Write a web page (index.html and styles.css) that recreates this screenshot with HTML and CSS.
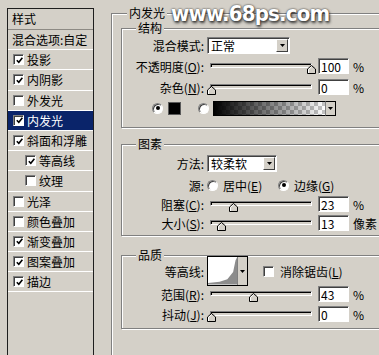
FILE: index.html
```html
<!DOCTYPE html>
<html lang="zh-CN">
<head>
    <meta charset="UTF-8">
    <meta name="viewport" content="width=device-width, initial-scale=1.0">
    <title>图层样式 - 内发光</title>
    <link rel="stylesheet" href="styles.css">
</head>
<body>
    <div class="dialog">
        <ul class="style-list">
            <li class="list-head">样式</li>
            <li class="item plain">混合选项:自定</li>
            <li class="item"><span class="cb"><svg viewBox="0 0 7 7"><path d="M0.8 3.2l2 2 3.6-4.4"/></svg></span>投影</li>
            <li class="item"><span class="cb"><svg viewBox="0 0 7 7"><path d="M0.8 3.2l2 2 3.6-4.4"/></svg></span>内阴影</li>
            <li class="item"><span class="cb"></span>外发光</li>
            <li class="item sel"><span class="cb"><svg viewBox="0 0 7 7"><path d="M0.8 3.2l2 2 3.6-4.4"/></svg></span>内发光</li>
            <li class="item"><span class="cb"><svg viewBox="0 0 7 7"><path d="M0.8 3.2l2 2 3.6-4.4"/></svg></span>斜面和浮雕</li>
            <li class="item sub"><span class="cb"><svg viewBox="0 0 7 7"><path d="M0.8 3.2l2 2 3.6-4.4"/></svg></span>等高线</li>
            <li class="item sub"><span class="cb"></span>纹理</li>
            <li class="item"><span class="cb"></span>光泽</li>
            <li class="item"><span class="cb"></span>颜色叠加</li>
            <li class="item"><span class="cb"><svg viewBox="0 0 7 7"><path d="M0.8 3.2l2 2 3.6-4.4"/></svg></span>渐变叠加</li>
            <li class="item"><span class="cb"><svg viewBox="0 0 7 7"><path d="M0.8 3.2l2 2 3.6-4.4"/></svg></span>图案叠加</li>
            <li class="item"><span class="cb"><svg viewBox="0 0 7 7"><path d="M0.8 3.2l2 2 3.6-4.4"/></svg></span>描边</li>
        </ul>

        <fieldset class="group outer">
            <legend>内发光</legend>

            <fieldset class="group struct">
                <legend>结构</legend>
                <div class="row">
                    <span class="label">混合模式:</span>
                    <div class="select mode">
                        <span>正常</span>
                        <span class="drop"><svg viewBox="0 0 5 3"><path d="M0 0h5l-2.5 3z"/></svg></span>
                    </div>
                </div>
                <div class="row">
                    <span class="label">不透明度(<u>O</u>):</span>
                    <div class="slider">
                        <div class="track"></div>
                        <svg class="thumb" style="left: 97px" viewBox="0 0 9 9"><path class="knob" d="M0.5 8.5V4L4.5 0.5 8.5 4v4.5z"/><path class="shine" d="M1.5 8V4.4l3-2.6"/></svg>
                    </div>
                    <input class="num" type="text" value="100">
                    <span class="unit">%</span>
                </div>
                <div class="row">
                    <span class="label">杂色(<u>N</u>):</span>
                    <div class="slider">
                        <div class="track"></div>
                        <svg class="thumb" style="left: -3px" viewBox="0 0 9 9"><path class="knob" d="M0.5 8.5V4L4.5 0.5 8.5 4v4.5z"/><path class="shine" d="M1.5 8V4.4l3-2.6"/></svg>
                    </div>
                    <input class="num" type="text" value="0">
                    <span class="unit">%</span>
                </div>
                <div class="row swatches">
                    <span class="radio on"></span>
                    <span class="swatch"></span>
                    <span class="radio alt"></span>
                    <span class="gradient"></span>
                    <span class="drop edge"><svg viewBox="0 0 5 3"><path d="M0 0h5l-2.5 3z"/></svg></span>
                </div>
            </fieldset>

            <fieldset class="group pixels">
                <legend>图素</legend>
                <div class="row">
                    <span class="label">方法:</span>
                    <div class="select method">
                        <span>较柔软</span>
                        <span class="drop"><svg viewBox="0 0 5 3"><path d="M0 0h5l-2.5 3z"/></svg></span>
                    </div>
                </div>
                <div class="row source">
                    <span class="label">源:</span>
                    <span class="radio"></span>
                    <span class="opt">居中(<u>E</u>)</span>
                    <span class="radio on"></span>
                    <span class="opt">边缘(<u>G</u>)</span>
                </div>
                <div class="row">
                    <span class="label">阻塞(<u>C</u>):</span>
                    <div class="slider">
                        <div class="track"></div>
                        <svg class="thumb" style="left: 19px" viewBox="0 0 9 9"><path class="knob" d="M0.5 8.5V4L4.5 0.5 8.5 4v4.5z"/><path class="shine" d="M1.5 8V4.4l3-2.6"/></svg>
                    </div>
                    <input class="num" type="text" value="23">
                    <span class="unit">%</span>
                </div>
                <div class="row">
                    <span class="label">大小(<u>S</u>):</span>
                    <div class="slider">
                        <div class="track"></div>
                        <svg class="thumb" style="left: 7px" viewBox="0 0 9 9"><path class="knob" d="M0.5 8.5V4L4.5 0.5 8.5 4v4.5z"/><path class="shine" d="M1.5 8V4.4l3-2.6"/></svg>
                    </div>
                    <input class="num" type="text" value="13">
                    <span class="unit">像素</span>
                </div>
            </fieldset>

            <fieldset class="group quality">
                <legend>品质</legend>
                <div class="row contour-row">
                    <span class="label">等高线:</span>
                    <div class="contour">
                        <svg class="curve" viewBox="0 0 30 28"><path d="M0 28V26.5L12 25 20 22.5 26 15 28.5 3 30 0V28z"/></svg>
                        <span class="drop flat"><svg viewBox="0 0 5 3"><path d="M0 0h5l-2.5 3z"/></svg></span>
                    </div>
                    <span class="cb aa"></span>
                    <span class="opt-text">消除锯齿(<u>L</u>)</span>
                </div>
                <div class="row range">
                    <span class="label">范围(<u>R</u>):</span>
                    <div class="slider">
                        <div class="track"></div>
                        <svg class="thumb" style="left: 39px" viewBox="0 0 9 9"><path class="knob" d="M0.5 8.5V4L4.5 0.5 8.5 4v4.5z"/><path class="shine" d="M1.5 8V4.4l3-2.6"/></svg>
                    </div>
                    <input class="num" type="text" value="43">
                    <span class="unit">%</span>
                </div>
                <div class="row">
                    <span class="label">抖动(<u>J</u>):</span>
                    <div class="slider">
                        <div class="track"></div>
                        <svg class="thumb" style="left: -3px" viewBox="0 0 9 9"><path class="knob" d="M0.5 8.5V4L4.5 0.5 8.5 4v4.5z"/><path class="shine" d="M1.5 8V4.4l3-2.6"/></svg>
                    </div>
                    <input class="num" type="text" value="0">
                    <span class="unit">%</span>
                </div>
            </fieldset>
        </fieldset>
    </div>

    <div class="watermark">www.68ps.com</div>
</body>
</html>
```

FILE: styles.css
```css
html, body { margin: 0; overflow: hidden; }
body { position: relative; width: 379px; height: 355px; background: #d4d0c8; color: #000; font: 12px "Noto Sans CJK SC", sans-serif; }
u { text-underline-offset: 1px; }

.dialog { display: flex; align-items: flex-start; }

/* left list of effects */
.style-list { flex: none; width: 87px; height: 370px; box-sizing: border-box; margin: 8px 17px 0 7px; padding: 0; list-style: none; border: 1px solid #1e1e1e; }
.list-head { height: 20px; line-height: 20px; padding-left: 4px; border-bottom: 1px solid #8d8a84; }
.item { display: flex; align-items: center; height: 19.2px; padding-left: 5px; border-bottom: 1px solid #fff; white-space: nowrap; }
.item.plain { padding-left: 4px; }
.item.sub { padding-left: 17px; }
.item.sel { background: #0a246a; color: #fff; }

.cb { flex: none; display: flex; align-items: center; justify-content: center; width: 11px; height: 11px; box-sizing: border-box; margin-right: 3px; background: #fff; border: 1px solid; border-color: #808080 #fff #fff #808080; box-shadow: inset 1px 1px #404040; }
.cb svg { width: 7px; height: 7px; margin: 1px 0 0 1px; fill: none; stroke: #000; stroke-width: 1.6; }

/* group boxes */
.group { min-width: 0; margin: 0; padding: 0; border: 1px solid #808080; box-shadow: inset 1px 1px #fff, 1px 1px #fff; }
.group > legend { margin-left: 14px; padding: 0 2px; line-height: 14px; background: #d4d0c8; }
.outer { flex: none; width: 290px; box-sizing: border-box; margin-top: 6px; padding: 1px 9px 30px; }
.outer > legend { margin-left: 6px; }
.struct { padding: 2px 0 11px; }
.pixels { margin-top: 9px; padding: 4px 0; }
.quality { margin-top: 12px; padding: 1px 0 6px; }

.row { display: flex; align-items: center; height: 16px; white-space: nowrap; }
.struct .row + .row { margin-top: 5px; }
.pixels .row + .row { margin-top: 3px; }
.pixels .row.source { margin-top: 6px; }
.quality .row + .row { margin-top: 4px; }
.quality .row.range { margin-top: 7px; }
.label { flex: none; width: 82px; text-align: right; }

/* controls */
.select { flex: none; display: flex; align-items: center; justify-content: space-between; height: 17px; box-sizing: border-box; margin-left: 3px; padding: 1px 1px 0 3px; background: #fff; border: 1px solid; border-color: #808080 #fff #fff #808080; box-shadow: inset 1px 1px #404040; }
.select.mode { width: 83px; }
.select.method { width: 70px; }
.drop { flex: none; display: flex; align-items: center; justify-content: center; width: 12px; height: 13px; box-sizing: border-box; background: #d4d0c8; border: 1px solid; border-color: #fff #404040 #404040 #fff; }
.drop svg { width: 5px; height: 3px; fill: #000; }
.drop.edge { width: 11px; height: 15px; border-color: #000; border-left-color: #808080; }
.drop.flat { width: 10px; height: 28px; border: 0; border-left: 1px solid #808080; }

.slider { position: relative; flex: none; width: 102px; height: 16px; margin-left: 6px; }
.track { height: 5px; margin-top: 5px; box-sizing: border-box; background: #d4d0c8; border: 1px solid; border-color: #808080 #fff #fff #808080; box-shadow: inset 1px 1px #000; }
.thumb { position: absolute; top: 7px; width: 9px; height: 9px; }
.thumb .knob { fill: #d4d0c8; stroke: #000; stroke-width: 1; }
.thumb .shine { fill: none; stroke: #fff; stroke-width: 1; }

.num { flex: none; width: 31px; height: 16px; box-sizing: border-box; margin: 0 0 0 6px; padding: 0 0 0 2px; font: inherit; line-height: 14px; color: #000; background: #fff; border: 1px solid; border-color: #808080 #fff #fff #808080; box-shadow: inset 1px 1px #404040; outline: none; }
.unit { margin-left: 4px; }

.radio { flex: none; position: relative; width: 11px; height: 11px; box-sizing: border-box; border-radius: 50%; background: #fff; border: 1px solid; border-color: #808080 #fff #fff #808080; box-shadow: inset 1px 1px #404040; }
.radio.on::after { content: ""; position: absolute; left: 2.5px; top: 2.5px; width: 4px; height: 4px; border-radius: 50%; background: #000; }

.swatches { padding-left: 30px; }
.swatch { flex: none; width: 13px; height: 13px; box-sizing: border-box; margin-left: 5px; background: #000; border: 1px solid #5a5a5a; }
.swatches .radio.alt { margin-left: 17px; }
.gradient { flex: none; width: 112px; height: 15px; box-sizing: border-box; margin-left: 4px; border: 1px solid #000; border-right: 0; background: linear-gradient(to right, #000, rgba(0, 0, 0, 0)), repeating-conic-gradient(#c4c4c4 0 25%, #fff 0 50%) 0 0 / 8px 8px; }

.source .radio { margin-left: 3px; }
.source .radio.on { margin-left: 4px; }
.source .opt { width: 51px; margin-left: 5px; }

.contour { flex: none; display: flex; width: 41px; height: 30px; box-sizing: border-box; margin-left: 3px; background: #fff; border: 1px solid #000; }
.contour .curve { width: 29px; height: 28px; fill: #8c8c8c; }
.cb.aa { margin-left: 15px; }
.opt-text { margin-left: 3px; }

.watermark { position: absolute; left: 171px; top: 1px; font: bold 22px "DejaVu Sans Condensed", "DejaVu Sans", sans-serif; letter-spacing: -0.8px; color: #fff; text-shadow: 0 0 2px #222, 1px 2px 3px #333; }
```
